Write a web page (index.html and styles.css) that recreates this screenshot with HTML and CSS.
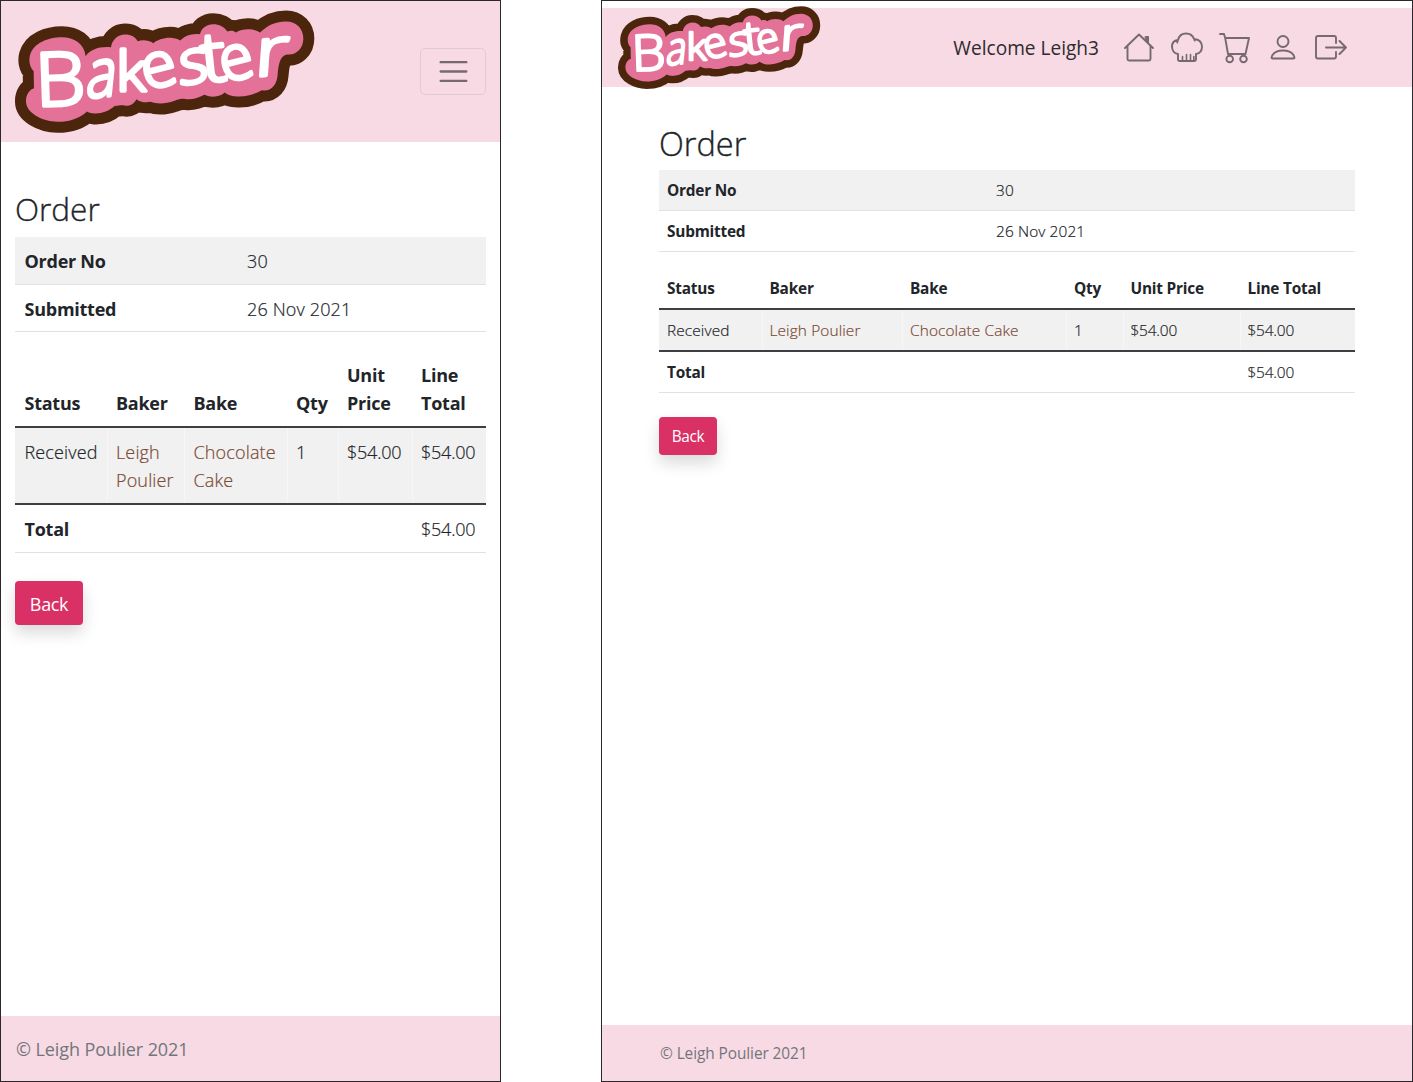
FILE: index.html
```html
<!DOCTYPE html>
<html lang="en">
<head>
<meta charset="utf-8">
<title>Bakester - Order</title>
<link rel="stylesheet" href="styles.css">
</head>
<body>
<main class="board">
  <section class="screen mobile">
    <header class="nav">
      <svg class="logo" viewBox="45 30 897 368">
        <path class="logo-blob" d="M101 213C88 200 86 180 90 165C100 128 145 111 186 111C222 111 253 130 257 168C270 148 298 138 333 141C336 119 354 103 375 103C393 103 407 111 413 123C428 118 446 120 460 129C476 115 516 105 541 121C552 108 575 99 600 102C603 85 619 72 640 72C657 72 674 80 682 94C693 90 701 92 708 97C726 85 760 83 780 97C798 80 822 64 858 64C889 64 910 86 910 115C910 147 886 166 862 163C843 166 836 184 833 222C831 253 815 275 785 270C767 281 741 290 713 289C698 289 683 285 674 277C663 288 638 295 613 284C596 293 578 299 558 297C542 294 533 298 524 302C498 311 472 313 452 305C436 308 420 306 410 297C402 310 390 319 374 316C361 313 353 318 345 317C327 333 304 341 284 340C273 339 265 337 261 334C239 355 208 365 172 365C125 364 79 338 78 305C77 284 88 268 102 264Z"/>
        <g class="logo-text">
          <text font-size="222" transform="translate(108 318) rotate(-2) scale(1.080 1)">B</text>
          <text font-size="200" transform="translate(255 294) rotate(-6) skewX(-12) scale(.850 1)">a</text>
          <text font-size="163" transform="translate(349 271) scale(1.120 1)">k</text>
          <text font-size="187" transform="translate(438 270) rotate(-14) scale(1.020 1)">e</text>
          <text font-size="186" transform="translate(537 256) rotate(-9) skewX(-8) scale(1.050 1)">s</text>
          <text font-size="208" transform="translate(610 247) rotate(-6) scale(1.080 1)">t</text>
          <text font-size="187" transform="translate(673 248) rotate(-14) scale(.980 1)">e</text>
          <text font-size="204" transform="translate(761 229) skewX(-9) rotate(-5) scale(1.250 1)">r</text>
        </g>
      </svg>
      <button class="toggler" aria-label="Menu"><svg viewBox="0 0 30 30"><path d="M4 7h22M4 15h22M4 23h22"/></svg></button>
    </header>
    <div class="content">
      <h1>Order</h1>
      <table class="summary">
        <colgroup><col class="s1"><col></colgroup>
        <tr class="stripe"><th>Order No</th><td>30</td></tr>
        <tr><th>Submitted</th><td>26 Nov 2021</td></tr>
      </table>
      <table class="lines">
        <colgroup><col class="c1"><col class="c2"><col class="c3"><col class="c4"><col class="c5"><col></colgroup>
        <thead><tr><th>Status</th><th>Baker</th><th>Bake</th><th>Qty</th><th>Unit<br>Price</th><th>Line<br>Total</th></tr></thead>
        <tbody><tr class="stripe"><td>Received</td><td><a>Leigh<br>Poulier</a></td><td><a>Chocolate<br>Cake</a></td><td>1</td><td class="price">$54.00</td><td class="price">$54.00</td></tr></tbody>
        <tfoot><tr><th colspan="5">Total</th><td class="price">$54.00</td></tr></tfoot>
      </table>
      <button class="back">Back</button>
    </div>
    <footer>© Leigh Poulier 2021</footer>
  </section>
  <section class="screen desktop">
    <header class="nav">
      <svg class="logo" viewBox="45 30 897 368">
        <path class="logo-blob" d="M101 213C88 200 86 180 90 165C100 128 145 111 186 111C222 111 253 130 257 168C270 148 298 138 333 141C336 119 354 103 375 103C393 103 407 111 413 123C428 118 446 120 460 129C476 115 516 105 541 121C552 108 575 99 600 102C603 85 619 72 640 72C657 72 674 80 682 94C693 90 701 92 708 97C726 85 760 83 780 97C798 80 822 64 858 64C889 64 910 86 910 115C910 147 886 166 862 163C843 166 836 184 833 222C831 253 815 275 785 270C767 281 741 290 713 289C698 289 683 285 674 277C663 288 638 295 613 284C596 293 578 299 558 297C542 294 533 298 524 302C498 311 472 313 452 305C436 308 420 306 410 297C402 310 390 319 374 316C361 313 353 318 345 317C327 333 304 341 284 340C273 339 265 337 261 334C239 355 208 365 172 365C125 364 79 338 78 305C77 284 88 268 102 264Z"/>
        <g class="logo-text">
          <text font-size="222" transform="translate(108 318) rotate(-2) scale(1.080 1)">B</text>
          <text font-size="200" transform="translate(255 294) rotate(-6) skewX(-12) scale(.850 1)">a</text>
          <text font-size="163" transform="translate(349 271) scale(1.120 1)">k</text>
          <text font-size="187" transform="translate(438 270) rotate(-14) scale(1.020 1)">e</text>
          <text font-size="186" transform="translate(537 256) rotate(-9) skewX(-8) scale(1.050 1)">s</text>
          <text font-size="208" transform="translate(610 247) rotate(-6) scale(1.080 1)">t</text>
          <text font-size="187" transform="translate(673 248) rotate(-14) scale(.980 1)">e</text>
          <text font-size="204" transform="translate(761 229) skewX(-9) rotate(-5) scale(1.250 1)">r</text>
        </g>
      </svg>
      <span class="welcome">Welcome Leigh3</span>
      <nav class="icons">
        <svg viewBox="0 0 32 32"><path d="M2 16L16 2.5L30 16M4.500 14V27Q4.500 28.500 6 28.500H26Q27.500 28.500 27.500 27V14"/><path d="M22.500 4.500h3v7l-3-3z" fill="currentColor" stroke-width="1"/></svg>
        <svg viewBox="0 0 32 32"><path d="M7 28V22C3 21.500 1 18 1 14.500C1 11 3.500 8.500 7 8C8 4 11 1.500 15 1.500C19 1.500 22 4 23.300 7.300C28 7 31 10.500 31 14.500C31 18.500 29 21.500 25 22V27Q25 29 23 29H9Q7 29 7 27.500M7 8C6.300 9 6.200 9.500 6.300 10.500M23.300 7.300L23.700 8.500"/><path d="M11.500 24.500V28M15.500 22.500V28M19.500 22.500V28M22.800 24.500V28" stroke-width="1.600"/></svg>
        <svg viewBox="0 0 32 32"><path d="M1 2h4l1.200 4M6.200 6H30L26.500 22H9Z"/><circle cx="10.700" cy="27" r="3.300"/><circle cx="24.500" cy="27" r="3.300"/></svg>
        <svg viewBox="0 0 32 32"><circle cx="16" cy="9.500" r="5.500"/><path d="M5.500 26.500C4 26.500 4.500 25 5.500 23C7.500 20 11 18.500 16 18.500S24.500 20 26.500 23C27.500 25 28 26.500 26.500 26.500Z"/></svg>
        <svg viewBox="0 0 32 32"><path d="M21 11V6Q21 4 19 4H3Q1 4 1 6V24.500Q1 26.500 3 26.500H19Q21 26.500 21 24.500V20M11 15.500H31M24.500 9L31 15.500L24.500 22"/></svg>
      </nav>
    </header>
    <div class="content">
      <h1>Order</h1>
      <table class="summary">
        <colgroup><col class="s1"><col></colgroup>
        <tr class="stripe"><th>Order No</th><td>30</td></tr>
        <tr><th>Submitted</th><td>26 Nov 2021</td></tr>
      </table>
      <table class="lines">
        <colgroup><col class="c1"><col class="c2"><col class="c3"><col class="c4"><col class="c5"><col></colgroup>
        <thead><tr><th>Status</th><th>Baker</th><th>Bake</th><th>Qty</th><th>Unit Price</th><th>Line Total</th></tr></thead>
        <tbody><tr class="stripe"><td>Received</td><td><a>Leigh Poulier</a></td><td><a>Chocolate Cake</a></td><td>1</td><td class="price">$54.00</td><td class="price">$54.00</td></tr></tbody>
        <tfoot><tr><th colspan="5">Total</th><td class="price">$54.00</td></tr></tfoot>
      </table>
      <button class="back">Back</button>
    </div>
    <footer>© Leigh Poulier 2021</footer>
  </section>
</main>
</body>
</html>
```
FILE: styles.css
```css
* { box-sizing: border-box; }
body { margin: 0; background: #fff; color: #212529; font-family: "Open Sans", "Noto Sans", sans-serif; font-weight: 300; }
.board { display: flex; justify-content: space-between; width: 1413px; height: 1082px; }
.screen { display: flex; flex-direction: column; border: 1px solid #2b272a; background: #fff; height: 1082px; }
.mobile { width: 501px; font-size: 18px; line-height: 28px; }
.desktop { width: 812px; font-size: 15.4px; line-height: 24px; }
.nav { display: flex; align-items: center; background: #f7dae4; }
.logo { display: block; flex: none; overflow: visible; }
.logo-blob { fill: #e47298; stroke: #4b260c; stroke-width: 66px; stroke-linejoin: round; paint-order: stroke; }
.logo-text { fill: #fff; stroke: #fff; stroke-width: 11px; stroke-linejoin: round; font-family: "Open Sans", sans-serif; font-weight: 300; }
.mobile .nav { height: 141px; padding: 0 14px; justify-content: space-between; }
.mobile .logo { width: 299px; height: 123px; }
.toggler { width: 66px; height: 47px; padding: 0; border: 1px solid #e3c9d2; border-radius: 5px; background: none; display: flex; align-items: center; justify-content: center; color: #766970; }
.toggler svg { width: 35px; height: 35px; fill: none; stroke: currentColor; stroke-width: 2; stroke-linecap: round; }
.desktop .nav { height: 79px; margin-top: 7px; padding: 0 65px 0 16px; }
.desktop .logo { width: 202px; height: 83px; }
.welcome { margin-left: auto; font-size: 19.1px; font-weight: 400; color: #2f2a2e; }
.icons { display: flex; gap: 16px; margin-left: 24px; color: #766970; }
.icons svg { width: 32px; height: 32px; fill: none; stroke: currentColor; stroke-width: 1.900; stroke-linejoin: round; stroke-linecap: round; }
.content { flex: 1; }
.mobile .content { padding: 47px 14px 0; }
.desktop .content { padding: 37px 57px 0; }
h1 { margin: 0; font-weight: 300; line-height: 40px; -webkit-text-stroke: .35px currentColor; }
.mobile h1 { margin-bottom: 8px; font-size: 31.500px; }
.desktop h1 { margin-bottom: 6px; font-size: 32.500px; }
table { width: 100%; table-layout: fixed; border-collapse: separate; border-spacing: 0; }
th, td { text-align: left; vertical-align: top; white-space: nowrap; border-bottom: 1px solid #dee2e6; padding: 9px 8px 7px; }
td { -webkit-text-stroke: .2px currentColor; letter-spacing: .008em; }
.price { letter-spacing: -.012em; }
th { font-weight: 700; letter-spacing: -.014em; }
thead th { vertical-align: bottom; }
.stripe > * { background: #f1f1f1; }
.lines thead th, .lines tbody td { border-bottom: 2px solid #3c3f43; }
.lines tbody td + td { box-shadow: inset 1px 0 #f6f6f6; }
a { color: #7b4a35; }
.mobile th, .mobile td { padding: 10px 9.500px 9px; }
.mobile .summary tr + tr > * { padding: 10px 9.500px 8px; }
.mobile .s1 { width: 222.500px; }
.mobile .lines { margin-top: 20px; }
.mobile .lines thead th { padding: 9px 9.500px; }
.mobile .c1 { width: 91.500px; }
.mobile .c2 { width: 77.500px; }
.mobile .c3 { width: 102.500px; }
.mobile .c4 { width: 51px; }
.mobile .c5 { width: 74px; }
.desktop .s1 { width: 329px; }
.desktop .lines { margin-top: 16px; }
.desktop .c1 { width: 102.500px; }
.desktop .c2 { width: 140.500px; }
.desktop .c3 { width: 164px; }
.desktop .c4 { width: 56.500px; }
.desktop .c5 { width: 117px; }
.back { display: block; padding: 0; border: 0; border-radius: 4px; background: #d93166; color: #fff; font: inherit; font-weight: 400; letter-spacing: -.02em; box-shadow: 0 8px 16px rgba(0,0,0,.15); }
.mobile .back { width: 68px; height: 44px; margin-top: 28px; padding-top: 1px; }
.desktop .back { width: 58px; height: 38px; margin-top: 24px; padding-top: 2px; }
footer { background: #f7dae4; color: #73757b; font-weight: 400; letter-spacing: -.005em; }
.mobile footer { height: 65px; padding: 19px 15px; }
.desktop footer { height: 56px; padding: 17px 58px; }
```
